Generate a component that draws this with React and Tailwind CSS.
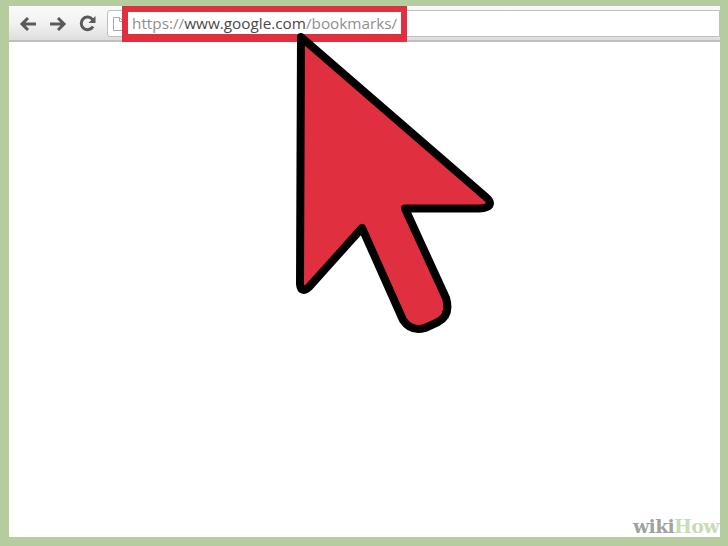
export default function App() {
  return (
    <div className="relative w-[728px] h-[546px] overflow-hidden bg-[#b5cd9e] pt-[6px] pl-[9px] pr-[8px] pb-[9px] font-['Open_Sans',sans-serif]">
      <div className="flex flex-col h-full bg-white">
        {/* browser toolbar */}
        <div className="flex items-start h-[36px] pl-[10px] pt-[4px] border-b-2 border-[#c0c0c0] bg-gradient-to-b from-[#fafafa] via-[#f2f2f2] to-[#dedede]">
          <div className="flex items-center gap-[12px] w-[88px] h-[27px] text-[#5a5a5a]">
            <svg width="18" height="16" viewBox="0 0 18 16" fill="none" stroke="currentColor" strokeWidth="3">
              <path d="M17 8H3M9 2 3 8l6 6" />
            </svg>
            <svg width="18" height="16" viewBox="0 0 18 16" fill="none" stroke="currentColor" strokeWidth="3">
              <path d="M1 8h14M9 2l6 6-6 6" />
            </svg>
            <svg width="17" height="17" viewBox="0 0 17 17" fill="none" stroke="currentColor" strokeWidth="3">
              <path d="M14 11.5A6.3 6.3 0 1 1 13.6 4.6" />
              <path d="M16.5 1v7h-7z" fill="currentColor" stroke="none" />
            </svg>
          </div>
          <div className="flex-1 flex items-center h-[27px] pl-[5px] bg-white border border-[#c0c0c0] rounded-l-[3px]">
            <svg width="11" height="14" viewBox="0 0 11 14" fill="none" stroke="#a8a8a8" strokeWidth="1">
              <path d="M.5.5h6l4 4v9H.5zM6.5.5v4h4" />
            </svg>
          </div>
        </div>
        <div className="flex-1 flex items-end justify-end">
          <span className="font-['DejaVu_Serif',serif] font-bold text-[19px] leading-[22px] tracking-[-0.7px] mr-[1px] text-[#9ea39e]">
            wiki<span className="text-[#c8dbb7]">How</span>
          </span>
        </div>
      </div>

      {/* red highlight round the url */}
      <div className="absolute left-[122px] top-[6px] w-[285px] h-[36px] flex items-center pl-[4px] border-[6px] border-b-[8px] border-[#e03040] bg-white text-[15.3px] whitespace-nowrap font-['Open_Sans',sans-serif]">
        <span className="text-[#8f8f8f]">https://</span>
        <span className="text-[#4a4a4a]">www.google.com</span>
        <span className="text-[#8f8f8f]">/bookmarks/</span>
      </div>

      {/* big arrow */}
      <svg className="absolute left-0 top-0" width="728" height="546" viewBox="0 0 728 546" fill="#e03040" stroke="#000" strokeWidth="8" strokeLinejoin="round">
        <path d="M301 37 L487 198 Q493 204 487 207 Q484 208.500 479 208.500 L405 208.500 L446 298 Q451 315 438 322 L425 328 Q411 332 403 320 L362 228 L309 287 Q301 294 300 284 Z" />
      </svg>
    </div>
  );
}
